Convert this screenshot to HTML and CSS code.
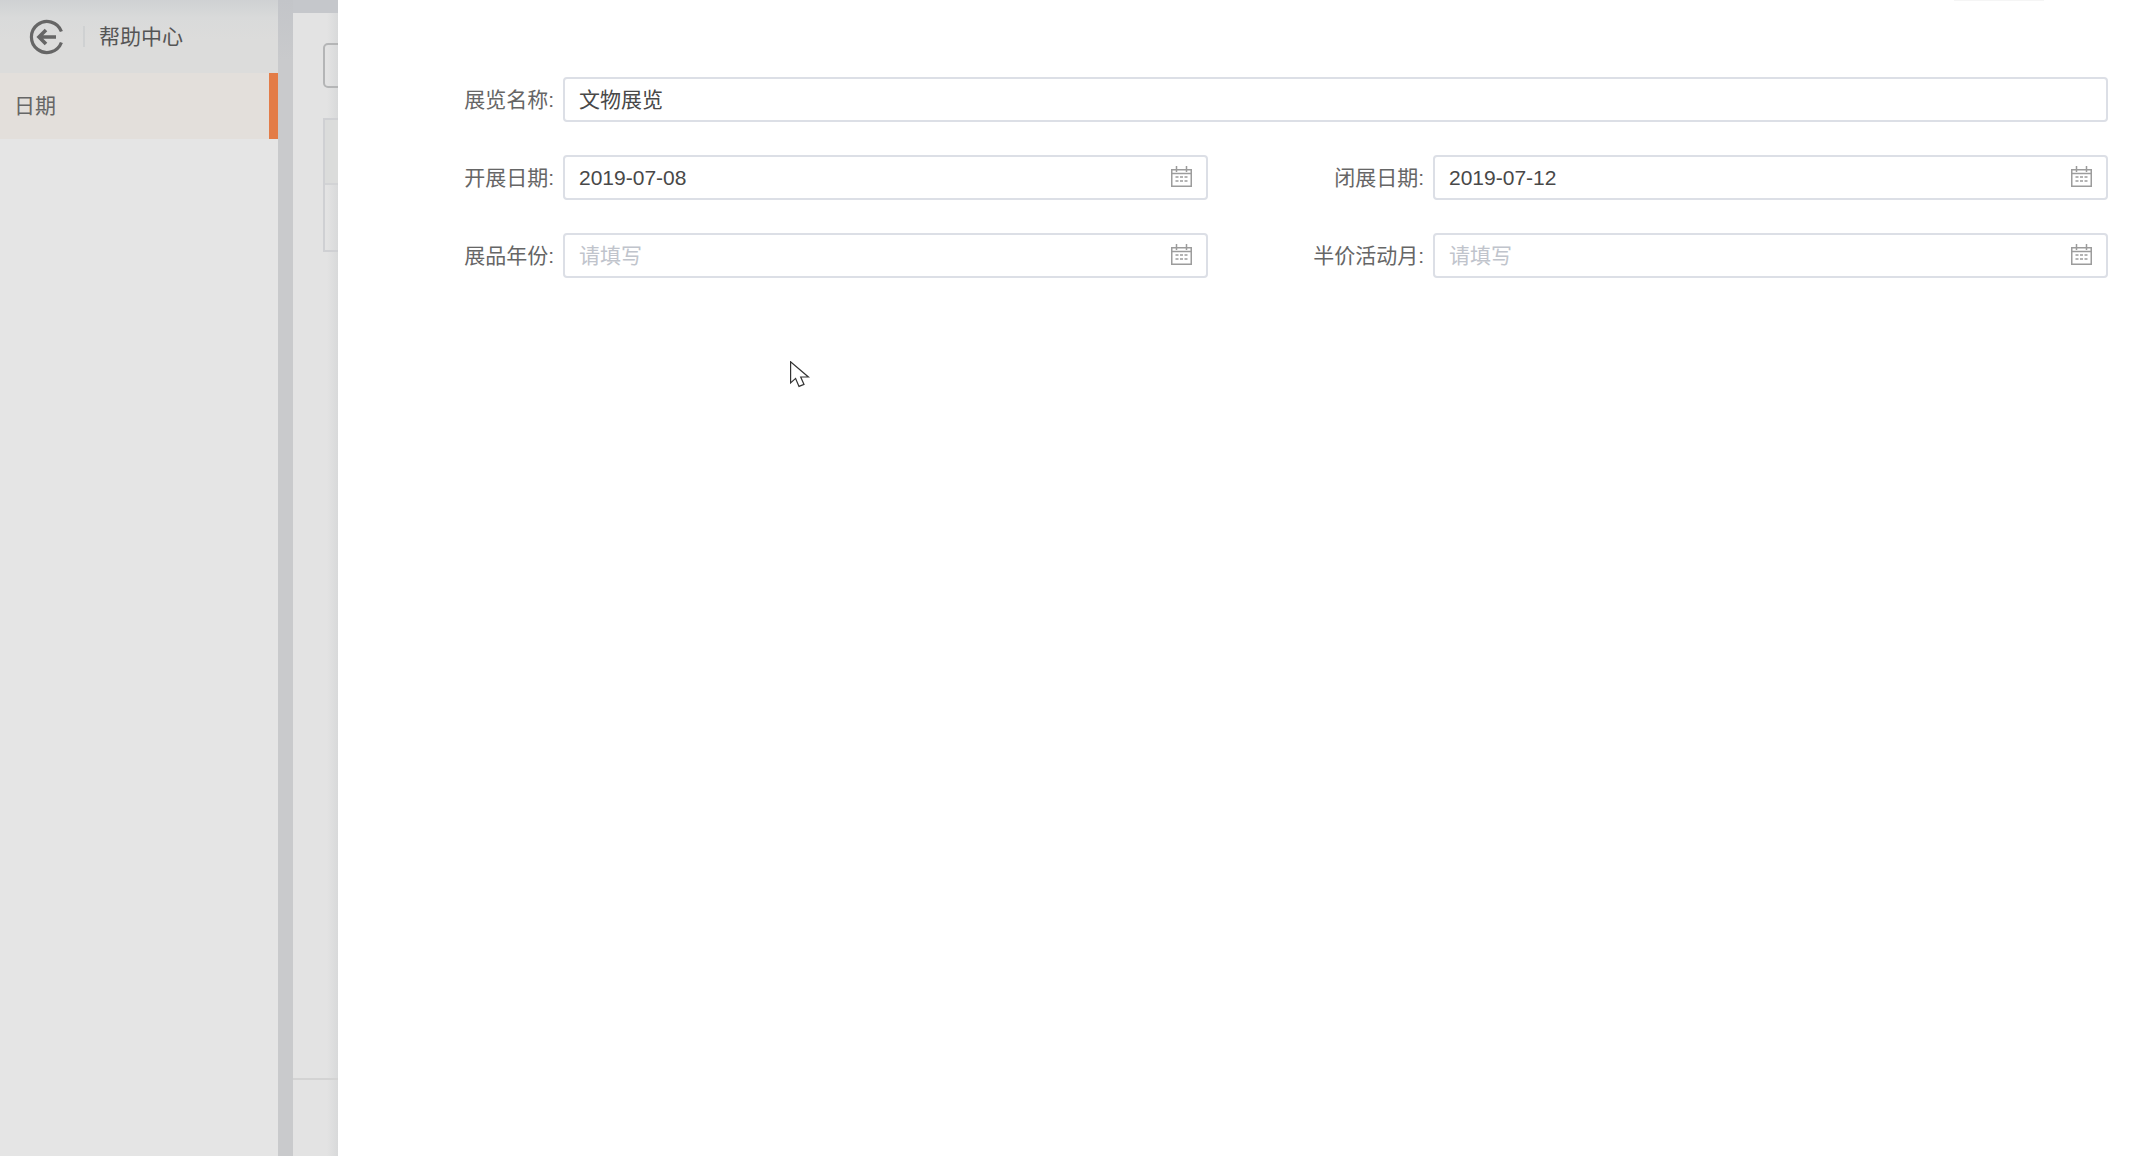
FILE: index.html
```html
<!DOCTYPE html>
<html lang="zh-CN">
<head>
<meta charset="utf-8">
<title>帮助中心</title>
<link rel="stylesheet" href="styles.css">
</head>
<body>
<div class="app">
  <aside class="sidebar">
    <header class="side-head">
      <svg class="back-icon" width="36" height="36" viewBox="0 0 36 36" fill="none" stroke="#666" stroke-width="3.2">
        <path d="M32.4 12.5A15.5 15.5 0 1 0 32.4 23.5"/>
        <path d="M27 18H10M17 11l-7 7 7 7" stroke-width="3.6"/>
      </svg>
      <span class="side-sep"></span>
      <span class="side-title">帮助中心</span>
    </header>
    <div class="side-item">日期</div>
  </aside>
  <div class="strip"></div>
  <section class="backdrop">
    <div class="backdrop-inner">
      <div class="ghost-btn"></div>
      <div class="ghost-table">
        <div class="ghost-head"></div>
        <div class="ghost-row"></div>
      </div>
      <div class="ghost-foot"></div>
    </div>
  </section>
  <main class="panel">
    <span class="panel-tick"></span>
    <form class="form">
      <label class="label">展览名称:</label>
      <div class="input wide"><span class="value">文物展览</span></div>

      <label class="label">开展日期:</label>
      <div class="input"><span class="value">2019-07-08</span>
        <svg class="cal" width="21" height="21" viewBox="0 0 21 21" fill="none" stroke="#9c9c9c"><path d="M.75 3.75h19.5v16.5H.75zM.75 7.5h19.5" stroke-width="1.5"/><path d="M5.5 0v6M15.5 0v6" stroke-width="1.5"/><path d="M4.5 11h3M9 11h3M13.5 11h3M4.5 15h3M9 15h3M13.5 15h3" stroke-width="1.5"/></svg>
      </div>
      <label class="label">闭展日期:</label>
      <div class="input"><span class="value">2019-07-12</span>
        <svg class="cal" width="21" height="21" viewBox="0 0 21 21" fill="none" stroke="#9c9c9c"><path d="M.75 3.75h19.5v16.5H.75zM.75 7.5h19.5" stroke-width="1.5"/><path d="M5.5 0v6M15.5 0v6" stroke-width="1.5"/><path d="M4.5 11h3M9 11h3M13.5 11h3M4.5 15h3M9 15h3M13.5 15h3" stroke-width="1.5"/></svg>
      </div>

      <label class="label">展品年份:</label>
      <div class="input"><span class="placeholder">请填写</span>
        <svg class="cal" width="21" height="21" viewBox="0 0 21 21" fill="none" stroke="#9c9c9c"><path d="M.75 3.75h19.5v16.5H.75zM.75 7.5h19.5" stroke-width="1.5"/><path d="M5.5 0v6M15.5 0v6" stroke-width="1.5"/><path d="M4.5 11h3M9 11h3M13.5 11h3M4.5 15h3M9 15h3M13.5 15h3" stroke-width="1.5"/></svg>
      </div>
      <label class="label">半价活动月:</label>
      <div class="input"><span class="placeholder">请填写</span>
        <svg class="cal" width="21" height="21" viewBox="0 0 21 21" fill="none" stroke="#9c9c9c"><path d="M.75 3.75h19.5v16.5H.75zM.75 7.5h19.5" stroke-width="1.5"/><path d="M5.5 0v6M15.5 0v6" stroke-width="1.5"/><path d="M4.5 11h3M9 11h3M13.5 11h3M4.5 15h3M9 15h3M13.5 15h3" stroke-width="1.5"/></svg>
      </div>
    </form>
  </main>
</div>
<svg class="pointer" width="21" height="28" viewBox="0 0 21 28" fill="#fff" stroke="#333" stroke-width="1.2"><path d="M.6.8V22l5-4.6 3.4 8 5-2-3.3-7.4H18.4z"/></svg>
</body>
</html>
```
FILE: styles.css
```css
* { box-sizing: border-box; }
html, body { margin: 0; height: 100%; overflow: hidden; }
body {
  font-family: "Liberation Sans", "Noto Sans CJK SC", sans-serif;
  font-size: 21px;
  line-height: 24px;
  background: #fff;
}
.app { display: flex; height: 1156px; }

.sidebar { width: 278px; flex: none; background: #e5e5e5; }
.side-head {
  height: 73px;
  display: flex;
  align-items: center;
  padding-left: 29px;
  background: linear-gradient(#cfd1d3 0, #d9dada 18px, #dcdcdb 40px, #dcdcdb 100%);
}
.back-icon { flex: none; }
.side-sep { width: 2px; height: 21px; margin: 0 14px 0 18px; background: #cfd1d2; }
.side-title { color: #555; }
.side-item {
  height: 66px;
  display: flex;
  align-items: center;
  padding-left: 14px;
  color: #666;
  background: #e3dfdb;
  border-right: 9px solid #e37c47;
}

.strip { width: 15px; flex: none; background: linear-gradient(#c3c5c9, #c9cacc 60px); }

.backdrop {
  width: 45px;
  flex: none;
  padding-top: 13px;
  background: #c5c7cb;
}
.backdrop-inner {
  height: 100%;
  display: flex;
  flex-direction: column;
  overflow: hidden;
  background: linear-gradient(90deg, #e3e3e3 0, #e3e3e3 34px, #d8d9da 100%);
}
.ghost-btn {
  width: 30px;
  height: 45px;
  flex: none;
  margin: 30px 0 0 30px;
  border: 2px solid #b4b5b6;
  border-radius: 5px;
}
.ghost-table {
  height: 134px;
  flex: none;
  margin: 30px 0 0 30px;
  border: 2px solid #cfd0d3;
  border-right: 0;
}
.ghost-head { height: 65px; background: #dbdcdb; border-bottom: 2px solid #d2d3d5; }
.ghost-row { height: 65px; }
.ghost-foot { margin-top: auto; height: 78px; flex: none; border-top: 2px solid #d3d3d3; }

.panel { flex: 1; position: relative; padding: 77px 30px 0 0; background: #fff; }
.panel-tick { position: absolute; top: 0; left: 1616px; width: 90px; height: 1px; background: #f5f5f5; }

.form {
  display: grid;
  grid-template-columns: 225px 645px 225px 1fr;
  grid-auto-rows: 45px;
  row-gap: 33px;
}
.label {
  display: flex;
  align-items: center;
  justify-content: flex-end;
  padding-right: 9px;
  color: #666;
  white-space: nowrap;
}
.input {
  display: flex;
  align-items: center;
  justify-content: space-between;
  padding: 0 14px;
  border: 2px solid #dcdfe6;
  border-radius: 4px;
  background: #fff;
}
.wide { grid-column: 2 / -1; }
.value { color: #484848; }
.placeholder { color: #c0c4cc; }
.cal { flex: none; display: block; margin-bottom: 2px; }

.pointer { position: absolute; left: 790px; top: 361px; }
```
